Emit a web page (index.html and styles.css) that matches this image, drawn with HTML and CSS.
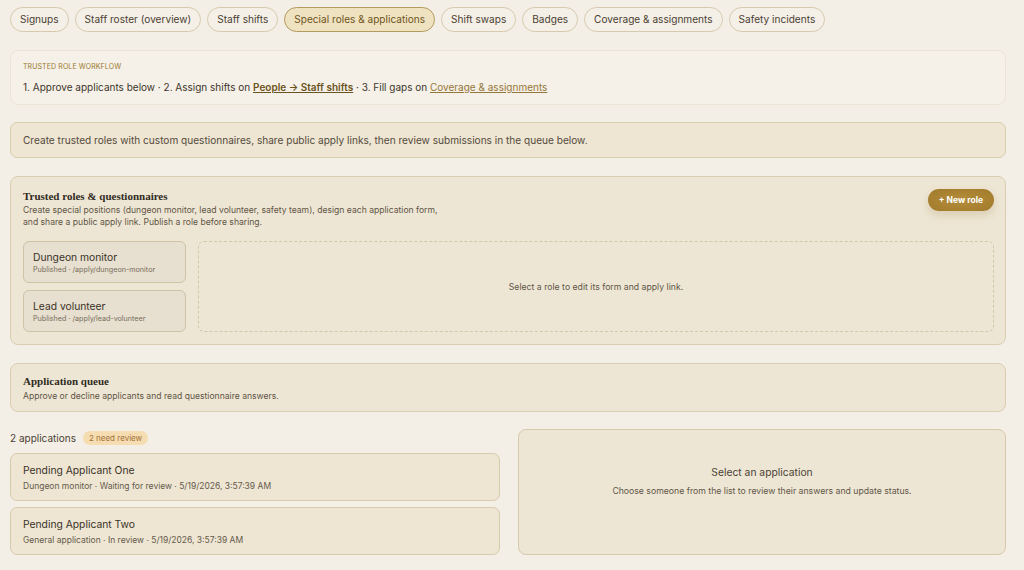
FILE: index.html
```html
<!DOCTYPE html>
<html lang="en">
<head>
  <meta charset="UTF-8">
  <title>Special roles &amp; applications</title>
  <link rel="stylesheet" href="styles.css">
</head>
<body>
  <div class="page">
    <nav class="tabs">
      <a class="tab" href="#">Signups</a>
      <a class="tab" href="#">Staff roster (overview)</a>
      <a class="tab" href="#">Staff shifts</a>
      <a class="tab active" href="#">Special roles &amp; applications</a>
      <a class="tab" href="#">Shift swaps</a>
      <a class="tab" href="#">Badges</a>
      <a class="tab" href="#">Coverage &amp; assignments</a>
      <a class="tab" href="#">Safety incidents</a>
    </nav>

    <div class="workflow">
      <div class="workflow-label">TRUSTED ROLE WORKFLOW</div>
      <div class="workflow-steps">
        1. Approve applicants below · 2. Assign shifts on <a class="link-strong" href="#">People → Staff shifts</a> · 3. Fill gaps on <a class="link" href="#">Coverage &amp; assignments</a>
      </div>
    </div>

    <div class="notice">
      Create trusted roles with custom questionnaires, share public apply links, then review submissions in the queue below.
    </div>

    <section class="panel roles">
      <div class="panel-head">
        <div>
          <h2 class="panel-title">Trusted roles &amp; questionnaires</h2>
          <p class="panel-desc">Create special positions (dungeon monitor, lead volunteer, safety team), design each application form,<br>and share a public apply link. Publish a role before sharing.</p>
        </div>
        <button class="btn-new">+ New role</button>
      </div>
      <div class="roles-body">
        <div class="role-list">
          <div class="role-card">
            <div class="role-name">Dungeon monitor</div>
            <div class="role-meta">Published · /apply/dungeon-monitor</div>
          </div>
          <div class="role-card">
            <div class="role-name">Lead volunteer</div>
            <div class="role-meta">Published · /apply/lead-volunteer</div>
          </div>
        </div>
        <div class="role-editor">Select a role to edit its form and apply link.</div>
      </div>
    </section>

    <section class="panel queue">
      <h2 class="panel-title">Application queue</h2>
      <p class="panel-desc">Approve or decline applicants and read questionnaire answers.</p>
    </section>

    <div class="apps">
      <div class="app-col">
        <div class="app-count">2 applications <span class="badge">2 need review</span></div>
        <div class="app-card">
          <div class="app-name">Pending Applicant One</div>
          <div class="app-meta">Dungeon monitor · Waiting for review · 5/19/2026, 3:57:39 AM</div>
        </div>
        <div class="app-card">
          <div class="app-name">Pending Applicant Two</div>
          <div class="app-meta">General application · In review · 5/19/2026, 3:57:39 AM</div>
        </div>
      </div>
      <div class="app-detail">
        <div class="detail-title">Select an application</div>
        <div class="detail-desc">Choose someone from the list to review their answers and update status.</div>
      </div>
    </div>
  </div>
</body>
</html>
```

FILE: styles.css
```css
* {
  box-sizing: border-box;
}

body {
  margin: 0;
  font-family: Inter, "Noto Sans", sans-serif;
  background-color: #f4efe6;
  color: #3b3428;
}

.page {
  padding: 7px 18px 0 10px;
}

.tabs {
  display: flex;
  gap: 6px;
}

.tab {
  display: block;
  height: 25px;
  padding: 5px 9px;
  font-size: 10.1px;
  line-height: 13px;
  color: #4a4133;
  text-decoration: none;
  border: 1px solid #d6c9ae;
  border-radius: 14px;
  background: #f5f0e7;
}

.tab.active {
  background: #efe2c1;
  border-color: #b39a5f;
  color: #6e5520;
}

.workflow {
  margin-top: 18px;
  height: 55px;
  padding: 10px 12px;
  border: 1px solid #ebe3d3;
  border-radius: 8px;
  background: #f5f0e8;
}

.workflow-label {
  font-size: 7px;
  line-height: 12px;
  color: #9a7a2c;
  letter-spacing: 0.1px;
}

.workflow-steps {
  margin-top: 7px;
  font-size: 10px;
  line-height: 14px;
  color: #3e372c;
}

.link-strong {
  color: #6b5320;
  font-weight: 600;
}

.link {
  color: #94773a;
}

.notice {
  margin-top: 17px;
  height: 36px;
  padding: 11px 12px;
  font-size: 10.1px;
  line-height: 13px;
  color: #544b3d;
  background: #eee5d2;
  border: 1px solid #d9ccb0;
  border-radius: 7px;
}

.panel {
  background: #eee6d4;
  border: 1px solid #d9ccb0;
  border-radius: 8px;
}

.roles {
  margin-top: 18px;
  padding: 12px 11px 12px 12px;
}

.panel-head {
  display: flex;
  justify-content: space-between;
  align-items: flex-start;
}

.panel-title {
  margin: 0;
  font-family: "Liberation Serif", "DejaVu Serif", serif;
  font-size: 11px;
  line-height: 14px;
  font-weight: bold;
  color: #2f2a22;
}

.panel-desc {
  margin: 1px 0 0;
  font-size: 8.6px;
  line-height: 12px;
  color: #5e5546;
}

.btn-new {
  margin-top: 0;
  height: 22px;
  padding: 0 11px;
  font-family: Inter, "Noto Sans", sans-serif;
  font-size: 8.5px;
  font-weight: bold;
  color: #fff;
  border: none;
  border-radius: 12px;
  background: radial-gradient(ellipse at center, #b48e3c 0%, #a07a2a 100%);
  box-shadow: 0 4px 10px rgba(120, 90, 30, 0.18);
}

.roles-body {
  display: flex;
  gap: 12px;
  margin-top: 13px;
}

.role-list {
  display: flex;
  flex-direction: column;
  gap: 7px;
  width: 163px;
  flex-shrink: 0;
}

.role-card {
  height: 42px;
  padding: 8px 9px 6px;
  background: #e7dfcf;
  border: 1px solid #cfc2a5;
  border-radius: 6px;
}

.role-name {
  font-size: 10.3px;
  line-height: 14px;
  color: #3a3328;
}

.role-meta {
  margin-top: 1px;
  font-size: 7.2px;
  line-height: 10px;
  color: #776d5c;
}

.role-editor {
  flex: 1;
  display: flex;
  align-items: center;
  justify-content: center;
  font-size: 8.7px;
  color: #5f5748;
  border: 1px dashed #d4c7a9;
  border-radius: 6px;
}

.queue {
  margin-top: 18px;
  height: 49px;
  padding: 10px 12px 9px;
}

.queue .panel-desc {
  margin-top: 2px;
}

.apps {
  display: flex;
  gap: 18px;
  margin-top: 17px;
  padding-bottom: 14px;
}

.app-col {
  width: 490px;
  display: flex;
  flex-direction: column;
  gap: 6px;
}

.app-count {
  display: flex;
  align-items: center;
  gap: 7px;
  height: 17px;
  font-size: 10px;
  line-height: 14px;
  color: #4a4234;
  margin-bottom: 1px;
}

.badge {
  padding: 1px 6px;
  font-size: 8px;
  line-height: 12px;
  color: #a2733a;
  background: #f6dcb1;
  border-radius: 8px;
}

.app-card {
  height: 48px;
  padding: 9px 12px 7px;
  background: #eee5d3;
  border: 1px solid #d7cbae;
  border-radius: 7px;
}

.app-name {
  font-size: 10.3px;
  line-height: 14px;
  color: #3a3328;
}

.app-meta {
  margin-top: 3px;
  font-size: 8.5px;
  line-height: 12px;
  color: #645b4b;
}

.app-detail {
  flex: 1;
  display: flex;
  flex-direction: column;
  align-items: center;
  justify-content: center;
  gap: 6px;
  padding-bottom: 22px;
  background: #eee6d4;
  border: 1px solid #d6c9ac;
  border-radius: 8px;
}

.detail-title {
  font-size: 10.3px;
  line-height: 14px;
  color: #4a4234;
}

.detail-desc {
  font-size: 8.7px;
  line-height: 12px;
  color: #5f5748;
}
```
